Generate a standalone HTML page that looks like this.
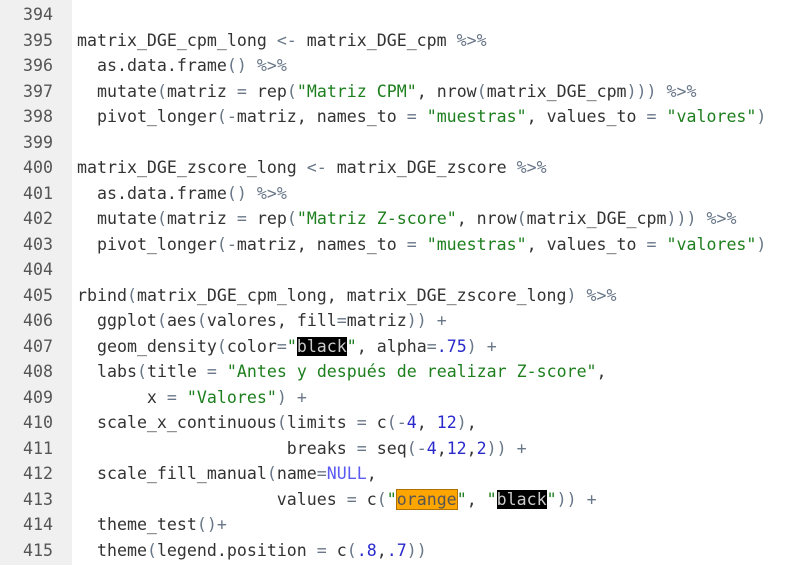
<!DOCTYPE html>
<html><head><meta charset="utf-8"><style>
html,body{margin:0;padding:0;width:800px;height:565px;overflow:hidden;background:#fff}
.g{position:absolute;left:0;top:0;width:72px;height:565px;background:#f0f0f0}
.c{position:absolute;left:0;top:2px;font-family:"DejaVu Sans Mono",monospace;font-size:16.6px;color:#333}
.l{height:25.5px;line-height:25.5px;position:relative;white-space:pre}
.n{display:inline-block;width:53px;text-align:right;color:#555;margin-right:24px}
.o{color:#687687}.s{color:#1d7f1d}.d{color:#2a2acc}.k{color:#5b5bf0}
.b{background:#000;color:#ccc}.r{background:#ffa500;color:#555;outline:1px solid #b07000}
</style></head><body><div class="g"></div><div class="c">
<div class="l"><span class="n">394</span></div>
<div class="l"><span class="n">395</span>matrix_DGE_cpm_long <span class="o">&lt;-</span> matrix_DGE_cpm <span class="o">%&gt;%</span></div>
<div class="l"><span class="n">396</span>  as.data.frame<span class="o">()</span> <span class="o">%&gt;%</span></div>
<div class="l"><span class="n">397</span>  mutate<span class="o">(</span>matriz <span class="o">=</span> rep<span class="o">(</span><span class="s">"Matriz CPM"</span>, nrow<span class="o">(</span>matrix_DGE_cpm<span class="o">)))</span> <span class="o">%&gt;%</span></div>
<div class="l"><span class="n">398</span>  pivot_longer<span class="o">(-</span>matriz, names_to <span class="o">=</span> <span class="s">"muestras"</span>, values_to <span class="o">=</span> <span class="s">"valores"</span><span class="o">)</span></div>
<div class="l"><span class="n">399</span></div>
<div class="l"><span class="n">400</span>matrix_DGE_zscore_long <span class="o">&lt;-</span> matrix_DGE_zscore <span class="o">%&gt;%</span></div>
<div class="l"><span class="n">401</span>  as.data.frame<span class="o">()</span> <span class="o">%&gt;%</span></div>
<div class="l"><span class="n">402</span>  mutate<span class="o">(</span>matriz <span class="o">=</span> rep<span class="o">(</span><span class="s">"Matriz Z-score"</span>, nrow<span class="o">(</span>matrix_DGE_cpm<span class="o">)))</span> <span class="o">%&gt;%</span></div>
<div class="l"><span class="n">403</span>  pivot_longer<span class="o">(-</span>matriz, names_to <span class="o">=</span> <span class="s">"muestras"</span>, values_to <span class="o">=</span> <span class="s">"valores"</span><span class="o">)</span></div>
<div class="l"><span class="n">404</span></div>
<div class="l"><span class="n">405</span>rbind<span class="o">(</span>matrix_DGE_cpm_long, matrix_DGE_zscore_long<span class="o">)</span> <span class="o">%&gt;%</span></div>
<div class="l"><span class="n">406</span>  ggplot<span class="o">(</span>aes<span class="o">(</span>valores, fill<span class="o">=</span>matriz<span class="o">))</span> <span class="o">+</span></div>
<div class="l"><span class="n">407</span>  geom_density<span class="o">(</span>color<span class="o">=</span><span class="s">"</span><span class="b">black</span><span class="s">"</span>, alpha<span class="o">=</span><span class="d">.75</span><span class="o">)</span> <span class="o">+</span></div>
<div class="l"><span class="n">408</span>  labs<span class="o">(</span>title <span class="o">=</span> <span class="s">"Antes y después de realizar Z-score"</span>,</div>
<div class="l"><span class="n">409</span>       x <span class="o">=</span> <span class="s">"Valores"</span><span class="o">)</span> <span class="o">+</span></div>
<div class="l"><span class="n">410</span>  scale_x_continuous<span class="o">(</span>limits <span class="o">=</span> c<span class="o">(-</span><span class="d">4</span>, <span class="d">12</span><span class="o">)</span>,</div>
<div class="l"><span class="n">411</span>                     breaks <span class="o">=</span> seq<span class="o">(-</span><span class="d">4</span>,<span class="d">12</span>,<span class="d">2</span><span class="o">))</span> <span class="o">+</span></div>
<div class="l"><span class="n">412</span>  scale_fill_manual<span class="o">(</span>name<span class="o">=</span><span class="k">NULL</span>,</div>
<div class="l"><span class="n">413</span>                    values <span class="o">=</span> c<span class="o">(</span><span class="s">"</span><span class="r">orange</span><span class="s">"</span>, <span class="s">"</span><span class="b">black</span><span class="s">"</span><span class="o">))</span> <span class="o">+</span></div>
<div class="l"><span class="n">414</span>  theme_test<span class="o">()+</span></div>
<div class="l"><span class="n">415</span>  theme<span class="o">(</span>legend.position <span class="o">=</span> c<span class="o">(</span><span class="d">.8</span>,<span class="d">.7</span><span class="o">))</span></div>
</div></body></html>
